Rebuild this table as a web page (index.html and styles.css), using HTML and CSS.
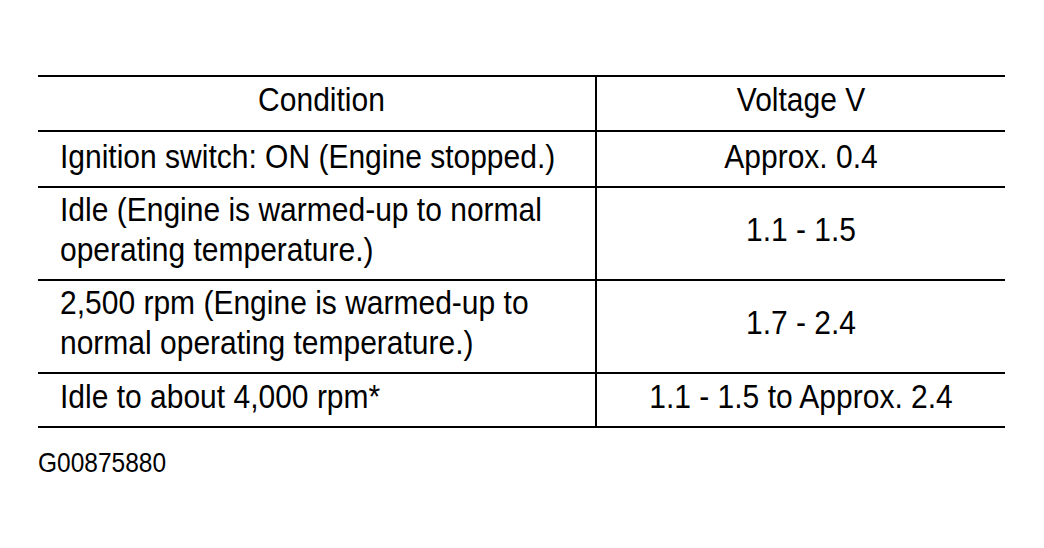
FILE: index.html
```html
<!DOCTYPE html>
<html>
<head>
<meta charset="utf-8">
<link rel="stylesheet" href="styles.css">
</head>
<body>
<div class="page">
  <div class="table">
    <div class="row head">
      <div class="cell cond center"><span class="t">Condition</span></div>
      <div class="cell volt"><span class="t">Voltage V</span></div>
    </div>
    <div class="row first">
      <div class="cell cond"><span class="t">Ignition switch: ON (Engine stopped.)</span></div>
      <div class="cell volt"><span class="t">Approx. 0.4</span></div>
    </div>
    <div class="row tall">
      <div class="cell cond"><span class="t">Idle (Engine is warmed-up to normal<br>operating temperature.)</span></div>
      <div class="cell volt"><span class="t">1.1 - 1.5</span></div>
    </div>
    <div class="row tall">
      <div class="cell cond"><span class="t">2,500 rpm (Engine is warmed-up to<br>normal operating temperature.)</span></div>
      <div class="cell volt"><span class="t">1.7 - 2.4</span></div>
    </div>
    <div class="row last">
      <div class="cell cond"><span class="t">Idle to about 4,000 rpm*</span></div>
      <div class="cell volt"><span class="t">1.1 - 1.5 to Approx. 2.4</span></div>
    </div>
  </div>
  <div class="code"><span class="t">G00875880</span></div>
</div>
</body>
</html>
```
FILE: styles.css
```css
html, body {
  margin: 0;
  padding: 0;
  background: #fff;
}
.page {
  padding: 75px 39px 0 38px;
  font-family: "Liberation Sans", Arial, sans-serif;
  color: #000;
}
.table {
  width: 967px;
  border-bottom: 2px solid #000;
}
.row {
  display: grid;
  grid-template-columns: 557px 410px;
  border-top: 2px solid #000;
}
.cell {
  font-size: 30px;
  line-height: 36px;
  display: flex;
  flex-direction: column;
  justify-content: center;
}
.t {
  display: inline-block;
  transform: scaleY(1.1);
}
.row.head .cell {
  padding: 5px 0 12px;
}
.row.first .cell {
  padding: 7px 0 11px;
}
.row.tall .cell {
  padding: 6px 0 13px;
}
.row.last .cell {
  padding: 5px 0 11px;
}
.cond {
  padding-left: 22px !important;
}
.cond.center {
  text-align: center;
  padding-left: 10px !important;
}
.volt {
  border-left: 2px solid #000;
  text-align: center;
  padding-left: 12px;
}
.code {
  margin-top: 20px;
  font-size: 24.5px;
  line-height: 30px;
}
```
